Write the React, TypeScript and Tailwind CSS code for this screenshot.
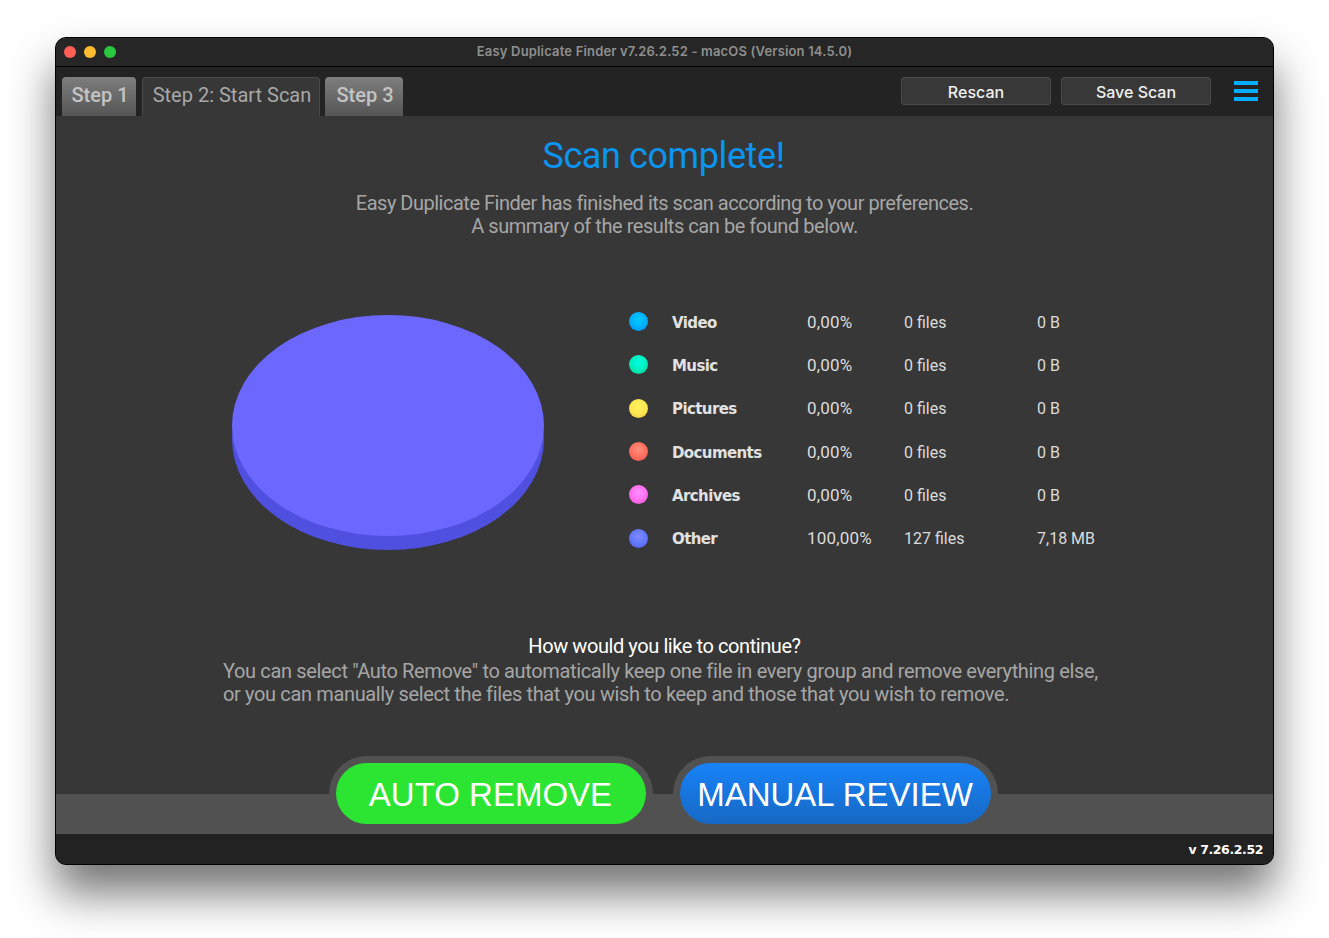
const ui = "font-['Roboto',sans-serif]";

const rows = [
  { name: "Video", pct: "0,00%", files: "0 files", size: "0 B", dot: "bg-[radial-gradient(circle_at_50%_40%,#00c8ff_0%,#00b0ff_50%,#0a84e8_100%)]" },
  { name: "Music", pct: "0,00%", files: "0 files", size: "0 B", dot: "bg-[radial-gradient(circle_at_50%_40%,#00ffe0_0%,#00f0c0_50%,#10c080_100%)]" },
  { name: "Pictures", pct: "0,00%", files: "0 files", size: "0 B", dot: "bg-[radial-gradient(circle_at_50%_40%,#fff060_0%,#ffe850_50%,#e8c040_100%)]" },
  { name: "Documents", pct: "0,00%", files: "0 files", size: "0 B", dot: "bg-[radial-gradient(circle_at_50%_40%,#ff9080_0%,#ff7060_50%,#e05048_100%)]" },
  { name: "Archives", pct: "0,00%", files: "0 files", size: "0 B", dot: "bg-[radial-gradient(circle_at_50%_40%,#ff90ff_0%,#ff70f0_50%,#e050c0_100%)]" },
  { name: "Other", pct: "100,00%", files: "127 files", size: "7,18 MB", dot: "bg-[radial-gradient(circle_at_50%_40%,#7c8cff_0%,#6478ff_50%,#4a58d8_100%)]" },
];

function Tab({ label, active, w }: { label: string; active?: boolean; w: string }) {
  return (
    <div
      className={
        "h-[39px] rounded-t-[4px] flex items-center justify-center text-[20px] pl-[2px] " +
        w + " " +
        (active
          ? "bg-[#373737] border border-b-0 border-[#4a4a4a] text-[#a8a8a8] pb-[4px]"
          : "bg-gradient-to-b from-[#7e7e7e] to-[#555555] text-[#c4c4c4] font-medium pb-[3px]")
      }
    >
      {label}
    </div>
  );
}

function ToolButton({ label }: { label: string }) {
  return (
    <div className="w-[150px] h-[28px] pt-[1px] rounded-[3px] bg-[#383838] border border-[#4a4a4a] flex items-center justify-center font-['Inter',sans-serif] text-[16px] font-medium text-[#f0f0f0]">
      {label}
    </div>
  );
}

export default function App() {
  return (
    <div className={"w-[1329px] h-[938px] bg-white overflow-hidden pt-[37px] pl-[55px] " + ui}>
      <div className="w-[1219px] h-[828px] rounded-[11px] border border-black bg-[#373737] overflow-hidden flex flex-col shadow-[0_28px_45px_rgba(0,0,0,0.55)]">
        {/* Title bar */}
        <div className="relative h-[29px] shrink-0 bg-[#262626] border-b border-black flex items-center justify-center">
          <div className="absolute left-[8px] top-[8px] flex gap-[8px]">
            <div className="w-[12px] h-[12px] rounded-full bg-[#ff5f57]" />
            <div className="w-[12px] h-[12px] rounded-full bg-[#febc2e]" />
            <div className="w-[12px] h-[12px] rounded-full bg-[#28c840]" />
          </div>
          <span className="font-['Inter',sans-serif] text-[13px] tracking-[0.17px] font-semibold text-[#8f8f8f]">
            Easy Duplicate Finder v7.26.2.52 - macOS (Version 14.5.0)
          </span>
        </div>

        {/* Toolbar */}
        <div className="h-[49px] shrink-0 bg-[#232323] flex items-end pl-[6px] pr-[15px]">
          <div className="flex">
            <Tab label="Step 1" w="w-[74px]" />
            <div className="ml-[6px]">
              <Tab label="Step 2: Start Scan" active w="w-[178px]" />
            </div>
            <div className="ml-[5px]">
              <Tab label="Step 3" w="w-[78px]" />
            </div>
          </div>
          <div className="ml-auto flex items-center gap-[10px] self-start pt-[10px]">
            <ToolButton label="Rescan" />
            <ToolButton label="Save Scan" />
            <div className="ml-[13px] w-[24px] flex flex-col gap-[4px]">
              <div className="h-[4px] bg-[#00aeff]" />
              <div className="h-[4px] bg-[#00aeff]" />
              <div className="h-[4px] bg-[#00aeff]" />
            </div>
          </div>
        </div>

        {/* Content */}
        <div className="flex-1 min-h-0 flex flex-col items-center">
          <h1 className="mt-[18px] ml-[-2px] text-[36px] leading-[44px] tracking-[-0.4px] text-[#0b94f0]">Scan complete!</h1>
          <p className="mt-[14px] text-[20px] leading-[23px] text-center text-[#a6a6a6]">
            <span className="tracking-[-0.49px]">Easy Duplicate Finder has finished its scan according to your preferences.</span>
            <br />
            <span className="tracking-[-0.45px]">A summary of the results can be found below.</span>
          </p>

          <div className="mt-[63px] w-full flex">
            <div className="ml-[176px] mt-[14px] w-[312px] shrink-0">
              <svg width="312" height="236" viewBox="0 0 312 236">
                <ellipse cx="156" cy="124.5" rx="156" ry="110.5" fill="#5050e0" />
                <ellipse cx="156" cy="110.5" rx="156" ry="110.5" fill="#6c67ff" />
              </svg>
            </div>
            <div className="ml-[85px] flex flex-col">
              {rows.map((r) => (
                <div key={r.name} className="h-[43.3px] flex items-center text-[16px] text-[#dcdcdc]">
                  <div className={"w-[19px] h-[19px] mb-[2px] rounded-full shrink-0 " + r.dot} />
                  <div className="ml-[24px] w-[135px] pt-[1px] font-['DejaVu_Sans',sans-serif] font-bold text-[15px] tracking-[-0.6px] text-[#e2e2e2]">{r.name}</div>
                  <div className="w-[97px] text-[17px] tracking-[0.2px]">{r.pct}</div>
                  <div className="w-[133px]">{r.files}</div>
                  <div>{r.size}</div>
                </div>
              ))}
            </div>
          </div>

          <div className="mt-[72px] w-[876px] ml-[-7px] text-[20px] leading-[23px] text-[#a6a6a6] whitespace-nowrap">
            <div className="pl-[7px] pb-[1px] text-center text-white leading-[26px] tracking-[-0.42px]">How would you like to continue?</div>
            <div className="tracking-[-0.35px]">You can select "Auto Remove" to automatically keep one file in every group and remove everything else,</div>
            <div className="tracking-[-0.36px]">or you can manually select the files that you wish to keep and those that you wish to remove.</div>
          </div>

          <div className="relative z-10 mt-[50px] mb-[-40px] ml-[-3px] flex gap-[20px] font-['Liberation_Sans',sans-serif] text-[33px] text-white">
            <div className="rounded-full bg-[#515151] p-[7px]">
              <div className="w-[310px] h-[61px] pt-[2px] rounded-full bg-[#2ce532] flex items-center justify-center">AUTO REMOVE</div>
            </div>
            <div className="rounded-full bg-[#515151] p-[7px]">
              <div className="w-[311px] h-[61px] pt-[2px] rounded-full bg-gradient-to-b from-[#1783f8] to-[#1768c4] flex items-center justify-center">MANUAL REVIEW</div>
            </div>
          </div>
        </div>

        {/* Band */}
        <div className="h-[40px] shrink-0 bg-[#515151]" />

        {/* Status */}
        <div className="h-[30px] shrink-0 bg-[#222222] flex items-center justify-end pr-[10px] pt-[3px] font-['DejaVu_Sans',sans-serif] font-bold text-[12.5px] tracking-[-0.4px] text-white">
          v 7.26.2.52
        </div>
      </div>
    </div>
  );
}
